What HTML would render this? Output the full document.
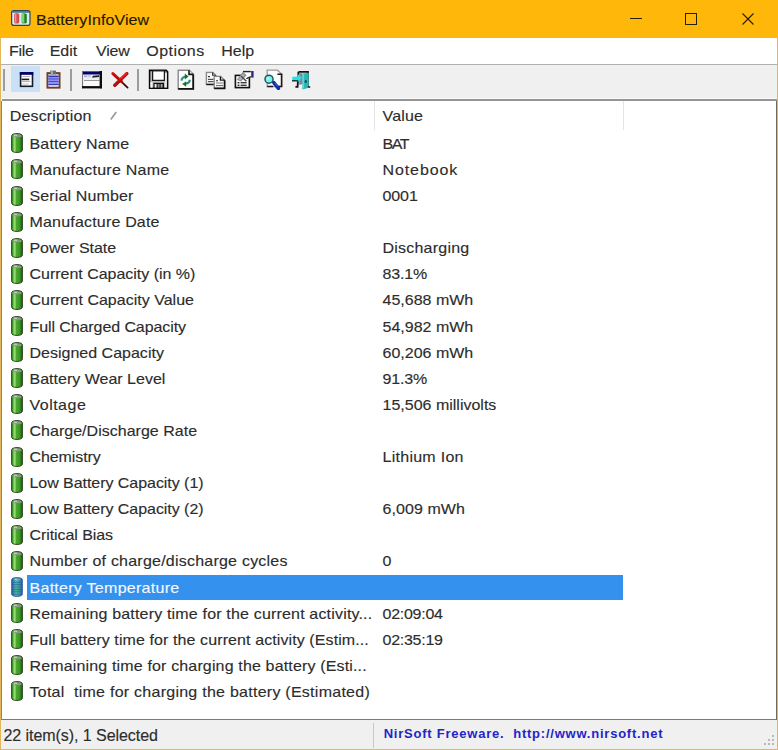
<!DOCTYPE html>
<html><head><meta charset="utf-8">
<style>
*{margin:0;padding:0;box-sizing:border-box}
html,body{width:778px;height:750px;overflow:hidden;background:#fff}
body{position:relative;font-family:"Liberation Sans",sans-serif;font-size:16px;color:#1a1a1a}
.row span,.hd,#menu span,#title .t,#status .s1{-webkit-text-stroke:0.15px #303030;color:#2c2c2c !important}
.row.sel span{-webkit-text-stroke:0.15px #f4f8ff;color:#f4f8ff !important}
#title .t{-webkit-text-stroke:0.15px #241800;color:#241800 !important}
.abs{position:absolute}
#title{left:0;top:0;width:778px;height:38px;background:#FFB80A}
#title .t{left:36px;top:9.5px;line-height:20px;font-size:16px;color:#2a1e00;letter-spacing:0.1px;transform:scaleY(0.87);transform-origin:0 15px}
#frameL{left:0;top:38px;width:1px;height:712px;background:#e2b65a}
#frameR{left:777px;top:38px;width:1px;height:712px;background:#e2b65a}
#frameB{left:0;top:748px;width:778px;height:2px;background:#e2b65a}
#menu{left:1px;top:38px;width:776px;height:26px;background:#fff}
#menu span{position:absolute;top:3px;line-height:20px;color:#1a1a1a;transform:scaleY(0.96);transform-origin:0 15px}
#menuline{left:1px;top:64px;width:776px;height:1px;background:#b0b0b0}
#tb{left:1px;top:65px;width:776px;height:34px;background:#f0f0f0;border-bottom:1px solid #fafafa}
#tbline{left:2px;top:99px;width:775px;height:2px;background:#959595}
.sep{position:absolute;width:2px;height:22px;top:69px;background:#9c9c9c}
#list{left:1px;top:101px;width:776px;height:619px;background:#fff;border-left:1px solid #8a8478;border-right:1px solid #6e6a60;border-bottom:1px solid #7a7a7a;overflow:hidden}
.hd{position:absolute;top:5px;line-height:20px;color:#2a2a2a;letter-spacing:0.15px;white-space:pre;transform:scaleY(0.87);transform-origin:0 15px}
.hsep{position:absolute;top:0;width:1px;height:29px;background:#e5e5e5}
.row{position:absolute;left:0;width:774px;height:26.1px}
.row .d{position:absolute;left:27.5px;top:-0.5px;line-height:26px;white-space:pre;letter-spacing:0.2px;color:#1a1a1a;transform:scaleY(0.87);transform-origin:0 18px}
.row .v{position:absolute;left:380.5px;top:-0.5px;line-height:26px;white-space:pre;letter-spacing:0.2px;color:#1a1a1a;transform:scaleY(0.87);transform-origin:0 18px}
.row.sel .d{color:#f4f8ff}
.hl{position:absolute;left:25px;top:-0.2px;width:596px;height:25.4px;background:#3492ee}
.bat{position:absolute;left:8.8px;top:2px;width:12px;height:20px}
#status{left:1px;top:720px;width:776px;height:29px;background:#f0f0f0}
#status .s1{position:absolute;left:2.4px;top:6px;line-height:20px;color:#1a1a1a;letter-spacing:-0.05px;white-space:pre;transform:scaleY(1);transform-origin:0 15px}
#status .s2{position:absolute;left:382.7px;top:4px;line-height:20px;color:#2424c8;font-weight:bold;font-size:13px;letter-spacing:0.77px;white-space:pre}
#ssep{left:373px;top:723px;width:1px;height:25px;background:#c8c8c8}
</style></head><body>
<div id="title" class="abs">
  <svg class="abs" style="left:11px;top:10px" width="20" height="16" viewBox="0 0 20 16">
    <rect x="0.6" y="0.6" width="18.4" height="14.8" rx="2.2" fill="#d8ecf2" stroke="#27485a" stroke-width="1.2"/>
    <rect x="1.4" y="1.2" width="16.8" height="1.5" fill="#3a6e7e"/>
    <rect x="3.2" y="3.2" width="5" height="10.4" rx="1.6" fill="#d84a50"/>
    <rect x="4" y="4" width="1.4" height="8.6" fill="#f09098"/>
    <rect x="10.6" y="3.2" width="5" height="10.4" rx="1.6" fill="#3aa038"/>
    <rect x="11.2" y="4" width="1.6" height="8.6" fill="#90e080"/>
    <rect x="14.4" y="4" width="1" height="9" fill="#1e5a1e"/>
  </svg>
  <div class="abs t">BatteryInfoView</div>
  <div class="abs" style="left:630px;top:18px;width:12px;height:1px;background:#2a1e00"></div>
  <div class="abs" style="left:685px;top:13px;width:12px;height:12px;border:1px solid #2a1e00"></div>
  <svg class="abs" style="left:742px;top:13px" width="12" height="12" viewBox="0 0 12 12"><path d="M0.5 0.5L11.5 11.5M11.5 0.5L0.5 11.5" stroke="#2a1e00" stroke-width="1.1"/></svg>
</div>
<div id="frameL" class="abs"></div>
<div id="frameR" class="abs"></div>
<div id="frameB" class="abs"></div>
<div id="menu" class="abs">
  <span style="left:8px;letter-spacing:-0.3px">File</span>
  <span style="left:48.7px">Edit</span>
  <span style="left:95px;letter-spacing:-0.2px">View</span>
  <span style="left:145.3px;letter-spacing:0.45px">Options</span>
  <span style="left:220.3px">Help</span>
</div>
<div id="menuline" class="abs"></div>
<div id="tb" class="abs"></div>

<div class="abs" style="left:11px;top:66px;width:29px;height:26px;background:#c9e0f7"></div>
<div class="sep" style="left:3px"></div>
<div class="sep" style="left:70px"></div>
<div class="sep" style="left:137px"></div>
<!-- icon1 -->
<svg class="abs" style="left:19px;top:72px" width="15" height="16" viewBox="0 0 15 16">
<rect x="1.6" y="0.9" width="11.9" height="13.4" fill="#fbfbfb" stroke="#141a28" stroke-width="1.6"/>
<rect x="0.8" y="0.1" width="13.5" height="2.7" fill="#00006a"/>
<rect x="3.2" y="4.2" width="8" height="0.8" fill="#a8a8a8"/>
<rect x="2.6" y="6.6" width="7.6" height="1.6" fill="#1c1c1c"/>
<rect x="3.2" y="9.2" width="8" height="0.8" fill="#a0a0a0"/>
<rect x="3.2" y="11.6" width="6.5" height="0.8" fill="#b8b8b8"/>
</svg>
<!-- icon2 clipboard -->
<svg class="abs" style="left:46px;top:70px" width="15" height="19" viewBox="0 0 15 19">
<rect x="1.1" y="2.8" width="12.8" height="15.2" fill="#7a4426" stroke="#6a3818" stroke-width="1.2"/>
<rect x="2.4" y="4.2" width="10.2" height="12.6" fill="#d8e0ff"/>
<rect x="2.4" y="5.6" width="10.2" height="1.4" fill="#3030b8"/>
<rect x="2.4" y="7" width="10.2" height="1.4" fill="#8c8cf4"/>
<rect x="2.4" y="8.4" width="10.2" height="1.3" fill="#3a3ac0"/>
<rect x="2.4" y="9.7" width="10.2" height="1.4" fill="#9090f4"/>
<rect x="2.4" y="11.1" width="10.2" height="1.3" fill="#3a3ac0"/>
<rect x="2.4" y="12.4" width="10.2" height="1.4" fill="#9494f4"/>
<rect x="2.4" y="13.8" width="10.2" height="1.3" fill="#3a3ac0"/>
<rect x="4.2" y="0.6" width="5.8" height="3.8" fill="#5a7a70"/>
<rect x="5.2" y="1.2" width="1.4" height="2.8" fill="#a8d0b8"/>
<rect x="7.6" y="1.2" width="1.2" height="2.8" fill="#7a5a80"/>
</svg>
<!-- icon3 window -->
<svg class="abs" style="left:82px;top:71px" width="20" height="18" viewBox="0 0 20 18">
<rect x="0" y="0" width="20" height="17.3" fill="#fafafa"/>
<rect x="0" y="0" width="1.1" height="17.3" fill="#7a7a7a"/>
<rect x="0" y="0" width="20" height="0.9" fill="#7a7a7a"/>
<rect x="1" y="0.7" width="17" height="3" fill="#00006e"/>
<rect x="1" y="3.7" width="17" height="4" fill="#e4e8f2"/>
<rect x="2" y="4.4" width="3" height="1.6" fill="#a8b0c8"/>
<rect x="5.6" y="4.4" width="3" height="1.6" fill="#c0c6d6"/>
<path d="M10 6.8 L11 4.8 L17 4.2 L17 5.9 L11.5 6.5Z" fill="#1a201a"/>
<rect x="2" y="8.9" width="15.5" height="1" fill="#8a8a8a"/>
<rect x="17.6" y="0" width="2.4" height="17.3" fill="#0c0c0c"/>
<rect x="0" y="15.1" width="20" height="2.3" fill="#0c0c0c"/>
</svg>
<!-- icon4 red X -->
<svg class="abs" style="left:111px;top:72px" width="18" height="17" viewBox="0 0 18 17">
<path d="M9 8.4 L16.6 15.6" stroke="#3a0808" stroke-width="1.8" stroke-linecap="round"/>
<path d="M1.9 1.6 L10.6 9.6" stroke="#c81414" stroke-width="3" stroke-linecap="round"/>
<path d="M2.6 2.8 L10.4 10" stroke="#7a0c0c" stroke-width="1" stroke-linecap="round"/>
<path d="M15.8 1.6 L3.8 13.2" stroke="#c01010" stroke-width="3.4" stroke-linecap="round"/>
<path d="M15.4 1.2 L9.8 6.6" stroke="#ec2a2a" stroke-width="1.2" stroke-linecap="round"/>
<path d="M4.6 14 L10.6 8.2" stroke="#8a0a0a" stroke-width="1" stroke-linecap="round"/>
</svg>
<!-- icon5 floppy -->
<svg class="abs" style="left:148px;top:69px" width="21" height="21" viewBox="0 0 21 21">
<path d="M1.6 1.4 L18.2 1.4 L19.6 2.8 L19.6 19.2 L1.6 19.2Z" fill="#c4c4c4" stroke="#0c0c0c" stroke-width="1.6"/>
<rect x="4.6" y="1.8" width="11.8" height="9.6" fill="#ffffff" stroke="#1a1a1a" stroke-width="1.3"/>
<rect x="2.4" y="13" width="2" height="5.6" fill="#f4f4f4"/>
<rect x="5.4" y="13.8" width="10.6" height="5.4" fill="#0c0c0c"/>
<rect x="6.6" y="15" width="2" height="3.6" fill="#f0f0f0"/>
<rect x="9.6" y="15" width="2" height="3.6" fill="#8a8a8a"/>
<rect x="12.6" y="15" width="2" height="3.6" fill="#a0a0a0"/>
<rect x="17" y="3.4" width="1.8" height="15" fill="#e8e8e8"/>
<rect x="17.4" y="2.4" width="1.2" height="1.2" fill="#303030"/>
</svg>
<!-- icon6 refresh doc -->
<svg class="abs" style="left:177px;top:69px" width="18" height="21" viewBox="0 0 18 21">
<path d="M1.2 1.2 L12.2 1.2 L16.4 5.4 L16.4 20 L1.2 20Z" fill="#fcfcfc" stroke="#8a8a8a" stroke-width="1.4"/>
<path d="M16.2 5.4 L16.2 19.8 L1.2 19.8" fill="none" stroke="#141414" stroke-width="1.8"/>
<path d="M12 1.2 L12 5.4 L16.4 5.4" fill="#f0f0f0" stroke="#141414" stroke-width="1.6"/>
<path d="M9 7.6 Q4.8 7.8 4.6 11.6" fill="none" stroke="#3a8a9a" stroke-width="2.2"/>
<path d="M7.8 4.4 L11.6 7.6 L7.8 10.6Z" fill="#0e7a16"/>
<path d="M8.6 14.6 Q12.6 14.4 12.8 10.8" fill="none" stroke="#2a8a7a" stroke-width="2.2"/>
<path d="M9.2 12.2 L5.2 15 L9.2 17.8Z" fill="#0e7a16"/>
</svg>
<!-- icon7 copy -->
<svg class="abs" style="left:205px;top:71px" width="21" height="19" viewBox="0 0 21 19">
<path d="M1.4 1.4 L7.8 1.4 L10.6 4.2 L10.6 13.4 L1.4 13.4Z" fill="#f8f8f8" stroke="#8a8a8a" stroke-width="1.4"/>
<path d="M10.6 4.2 L10.6 13.4 L1.4 13.4" fill="none" stroke="#1a1a1a" stroke-width="1.5"/>
<path d="M7.6 1.4 L7.6 4.2 L10.6 4.2" fill="none" stroke="#303030" stroke-width="1.1"/>
<rect x="3" y="5" width="2" height="1.2" fill="#303030"/>
<rect x="3" y="7.8" width="5.6" height="1.2" fill="#505050"/>
<rect x="3" y="10" width="5.6" height="1.2" fill="#505050"/>
<path d="M9.2 5.4 L15.6 5.4 L19.6 9.2 L19.6 17.4 L9.2 17.4Z" fill="#f8f8f8" stroke="#8a8a8a" stroke-width="1.4"/>
<path d="M19.6 9.2 L19.6 17.4 L9.2 17.4" fill="none" stroke="#101010" stroke-width="1.7"/>
<path d="M15.4 5.4 L15.4 9.2 L19.6 9.2" fill="none" stroke="#1a1a1a" stroke-width="1.3"/>
<rect x="11" y="9.2" width="2" height="1.1" fill="#404040"/>
<rect x="11" y="11.4" width="7" height="1.3" fill="#9a9a9a"/>
<rect x="11" y="14" width="7" height="1.1" fill="#707070"/>
</svg>
<!-- icon8 properties -->
<svg class="abs" style="left:234px;top:70px" width="21" height="19" viewBox="0 0 21 19">
<rect x="1.4" y="5.4" width="14" height="12.2" fill="#fafafa" stroke="#111111" stroke-width="1.6"/>
<path d="M9 1.6 L16.8 1.6 L17 6.4 L12.2 10.6 L7.4 6.2Z" fill="#ffffff"/>
<path d="M2.8 9.8 L9 1.8 L12.6 5.2 L7 11.6Z" fill="#8a8a8a"/>
<path d="M4 9.6 L9 3.4 L10.8 5 L6.6 10.4Z" fill="#b0b0b0"/>
<path d="M7.2 6.2 L12.4 11.2" stroke="#4a4a5a" stroke-width="1.5"/>
<path d="M9 1.6 L16.8 1.6" stroke="#222222" stroke-width="1.4"/>
<path d="M12.4 8.6 L17 6.6" stroke="#222222" stroke-width="1.3"/>
<rect x="17.2" y="1" width="2.4" height="6.6" fill="#2a2a80"/>
<rect x="3.6" y="12" width="1.8" height="1.4" fill="#202020"/>
<rect x="6.6" y="12" width="6" height="1.4" fill="#3a3a3a"/>
<rect x="3.6" y="14.6" width="1.8" height="1.4" fill="#202020"/>
<rect x="6.6" y="14.6" width="6" height="1.4" fill="#3a3a3a"/>
</svg>
<!-- icon9 find -->
<svg class="abs" style="left:263px;top:69px" width="20" height="21" viewBox="0 0 20 21">
<path d="M4.2 1.2 L14.5 1.2 L18.6 5 L18.6 17.5 L4.2 17.5Z" fill="#fbfbfb" stroke="#9a9a9a" stroke-width="1.3"/>
<path d="M14.4 5.2 L18.6 5.2 L18.6 17.5 L13 17.5" fill="none" stroke="#1a1a1a" stroke-width="1.6"/>
<path d="M4.2 17.5 L10 17.5" stroke="#1a1a1a" stroke-width="1.4"/>
<path d="M10.8 13.6 L15.4 19.4" stroke="#0c2aa8" stroke-width="3.4" stroke-linecap="round"/>
<path d="M11.6 13.8 L14.6 17.6" stroke="#3a6ae0" stroke-width="1"/>
<circle cx="6" cy="10.2" r="4" fill="#78f0ea" stroke="#1e5a5a" stroke-width="1.5"/>
<circle cx="5" cy="9.4" r="1.5" fill="#c0fff8" opacity="0.7"/>
</svg>
<!-- icon10 exit -->
<svg class="abs" style="left:291px;top:70px" width="20" height="20" viewBox="0 0 20 20">
<path d="M7.6 1.8 L17 1.8 L17 17" fill="none" stroke="#141414" stroke-width="1.8"/>
<path d="M7.4 1.8 L6.6 16.8 L4.4 16.8" fill="none" stroke="#141414" stroke-width="1.8"/>
<path d="M8.2 2.7 L11.5 3.6 L11.5 14 L8.2 15Z" fill="#8088a0"/>
<path d="M11.4 3.4 L17.8 2.8 L17.8 17.8 L11.4 19.4Z" fill="#2cb4b4"/>
<path d="M12.4 4 L12.4 18.4" stroke="#5ad8d8" stroke-width="1.4"/>
<rect x="13.8" y="10.4" width="1.8" height="2.2" fill="#0a3232"/>
<path d="M1.6 6.8 L6.4 6.8 L6.6 3.8 L10.8 8 L6.6 12 L6.4 10.4 L1.6 10.4 Q0.6 8.6 1.6 6.8Z" fill="#2ae0e0"/>
<path d="M1 10.8 L7 10.8" stroke="#0a2e2e" stroke-width="1.4"/>
<path d="M17 16.6 L19.2 17.2" stroke="#141414" stroke-width="1.5"/>
</svg>

<div id="tbline" class="abs"></div>
<div id="list" class="abs">
<span class="hd" style="left:7.8px">Description</span>
<svg class="abs" style="left:107px;top:10px" width="9" height="10" viewBox="0 0 9 10"><path d="M1.8 8.6 L7.2 0.9" stroke="#9a9a9a" stroke-width="1.7"/></svg>
<span class="hd" style="left:380.5px">Value</span>
<div class="hsep" style="left:372px"></div>
<div class="hsep" style="left:621px"></div>
<div class="row" style="top:30.30px"><svg class="bat" width="12" height="20" viewBox="0 0 12 20">
<defs><linearGradient id="g0" x1="0" x2="1" y1="0" y2="0">
<stop offset="0" stop-color="#2a5a1a"/><stop offset="0.14" stop-color="#58b83c"/><stop offset="0.3" stop-color="#9ae878"/>
<stop offset="0.44" stop-color="#4aa830"/><stop offset="0.72" stop-color="#3a9a24"/><stop offset="0.9" stop-color="#2a7018"/><stop offset="1" stop-color="#1c3e10"/></linearGradient></defs>
<path d="M0.6 3.2 Q0.6 0.6 6 0.6 Q11.4 0.6 11.4 3.2 L11.4 16.8 Q11.4 19.4 6 19.4 Q0.6 19.4 0.6 16.8Z" fill="url(#g0)" stroke="#2c4a20" stroke-width="1"/>
<path d="M1.2 3.2 Q1.5 1.2 6 1.2 Q10.5 1.2 10.8 3.2 Q10.5 4.2 6 4.2 Q1.5 4.2 1.2 3.2Z" fill="#8a9a88"/>
<path d="M3 3 Q4 2.2 6 2.2" stroke="#e8f0e8" stroke-width="0.8" fill="none"/>
</svg><span class="d" style="letter-spacing:0.164px">Battery Name</span><span class="v" style="letter-spacing:-1.500px">BAT</span></div>
<div class="row" style="top:56.40px"><svg class="bat" width="12" height="20" viewBox="0 0 12 20">
<defs><linearGradient id="g1" x1="0" x2="1" y1="0" y2="0">
<stop offset="0" stop-color="#2a5a1a"/><stop offset="0.14" stop-color="#58b83c"/><stop offset="0.3" stop-color="#9ae878"/>
<stop offset="0.44" stop-color="#4aa830"/><stop offset="0.72" stop-color="#3a9a24"/><stop offset="0.9" stop-color="#2a7018"/><stop offset="1" stop-color="#1c3e10"/></linearGradient></defs>
<path d="M0.6 3.2 Q0.6 0.6 6 0.6 Q11.4 0.6 11.4 3.2 L11.4 16.8 Q11.4 19.4 6 19.4 Q0.6 19.4 0.6 16.8Z" fill="url(#g1)" stroke="#2c4a20" stroke-width="1"/>
<path d="M1.2 3.2 Q1.5 1.2 6 1.2 Q10.5 1.2 10.8 3.2 Q10.5 4.2 6 4.2 Q1.5 4.2 1.2 3.2Z" fill="#8a9a88"/>
<path d="M3 3 Q4 2.2 6 2.2" stroke="#e8f0e8" stroke-width="0.8" fill="none"/>
</svg><span class="d" style="letter-spacing:0.240px">Manufacture Name</span><span class="v" style="letter-spacing:0.900px">Notebook</span></div>
<div class="row" style="top:82.50px"><svg class="bat" width="12" height="20" viewBox="0 0 12 20">
<defs><linearGradient id="g2" x1="0" x2="1" y1="0" y2="0">
<stop offset="0" stop-color="#2a5a1a"/><stop offset="0.14" stop-color="#58b83c"/><stop offset="0.3" stop-color="#9ae878"/>
<stop offset="0.44" stop-color="#4aa830"/><stop offset="0.72" stop-color="#3a9a24"/><stop offset="0.9" stop-color="#2a7018"/><stop offset="1" stop-color="#1c3e10"/></linearGradient></defs>
<path d="M0.6 3.2 Q0.6 0.6 6 0.6 Q11.4 0.6 11.4 3.2 L11.4 16.8 Q11.4 19.4 6 19.4 Q0.6 19.4 0.6 16.8Z" fill="url(#g2)" stroke="#2c4a20" stroke-width="1"/>
<path d="M1.2 3.2 Q1.5 1.2 6 1.2 Q10.5 1.2 10.8 3.2 Q10.5 4.2 6 4.2 Q1.5 4.2 1.2 3.2Z" fill="#8a9a88"/>
<path d="M3 3 Q4 2.2 6 2.2" stroke="#e8f0e8" stroke-width="0.8" fill="none"/>
</svg><span class="d" style="letter-spacing:0.133px">Serial Number</span><span class="v" style="letter-spacing:-0.100px">0001</span></div>
<div class="row" style="top:108.60px"><svg class="bat" width="12" height="20" viewBox="0 0 12 20">
<defs><linearGradient id="g3" x1="0" x2="1" y1="0" y2="0">
<stop offset="0" stop-color="#2a5a1a"/><stop offset="0.14" stop-color="#58b83c"/><stop offset="0.3" stop-color="#9ae878"/>
<stop offset="0.44" stop-color="#4aa830"/><stop offset="0.72" stop-color="#3a9a24"/><stop offset="0.9" stop-color="#2a7018"/><stop offset="1" stop-color="#1c3e10"/></linearGradient></defs>
<path d="M0.6 3.2 Q0.6 0.6 6 0.6 Q11.4 0.6 11.4 3.2 L11.4 16.8 Q11.4 19.4 6 19.4 Q0.6 19.4 0.6 16.8Z" fill="url(#g3)" stroke="#2c4a20" stroke-width="1"/>
<path d="M1.2 3.2 Q1.5 1.2 6 1.2 Q10.5 1.2 10.8 3.2 Q10.5 4.2 6 4.2 Q1.5 4.2 1.2 3.2Z" fill="#8a9a88"/>
<path d="M3 3 Q4 2.2 6 2.2" stroke="#e8f0e8" stroke-width="0.8" fill="none"/>
</svg><span class="d" style="letter-spacing:0.187px">Manufacture Date</span><span class="v" style="letter-spacing:0.200px"></span></div>
<div class="row" style="top:134.70px"><svg class="bat" width="12" height="20" viewBox="0 0 12 20">
<defs><linearGradient id="g4" x1="0" x2="1" y1="0" y2="0">
<stop offset="0" stop-color="#2a5a1a"/><stop offset="0.14" stop-color="#58b83c"/><stop offset="0.3" stop-color="#9ae878"/>
<stop offset="0.44" stop-color="#4aa830"/><stop offset="0.72" stop-color="#3a9a24"/><stop offset="0.9" stop-color="#2a7018"/><stop offset="1" stop-color="#1c3e10"/></linearGradient></defs>
<path d="M0.6 3.2 Q0.6 0.6 6 0.6 Q11.4 0.6 11.4 3.2 L11.4 16.8 Q11.4 19.4 6 19.4 Q0.6 19.4 0.6 16.8Z" fill="url(#g4)" stroke="#2c4a20" stroke-width="1"/>
<path d="M1.2 3.2 Q1.5 1.2 6 1.2 Q10.5 1.2 10.8 3.2 Q10.5 4.2 6 4.2 Q1.5 4.2 1.2 3.2Z" fill="#8a9a88"/>
<path d="M3 3 Q4 2.2 6 2.2" stroke="#e8f0e8" stroke-width="0.8" fill="none"/>
</svg><span class="d" style="letter-spacing:-0.060px">Power State</span><span class="v" style="letter-spacing:0.220px">Discharging</span></div>
<div class="row" style="top:160.80px"><svg class="bat" width="12" height="20" viewBox="0 0 12 20">
<defs><linearGradient id="g5" x1="0" x2="1" y1="0" y2="0">
<stop offset="0" stop-color="#2a5a1a"/><stop offset="0.14" stop-color="#58b83c"/><stop offset="0.3" stop-color="#9ae878"/>
<stop offset="0.44" stop-color="#4aa830"/><stop offset="0.72" stop-color="#3a9a24"/><stop offset="0.9" stop-color="#2a7018"/><stop offset="1" stop-color="#1c3e10"/></linearGradient></defs>
<path d="M0.6 3.2 Q0.6 0.6 6 0.6 Q11.4 0.6 11.4 3.2 L11.4 16.8 Q11.4 19.4 6 19.4 Q0.6 19.4 0.6 16.8Z" fill="url(#g5)" stroke="#2c4a20" stroke-width="1"/>
<path d="M1.2 3.2 Q1.5 1.2 6 1.2 Q10.5 1.2 10.8 3.2 Q10.5 4.2 6 4.2 Q1.5 4.2 1.2 3.2Z" fill="#8a9a88"/>
<path d="M3 3 Q4 2.2 6 2.2" stroke="#e8f0e8" stroke-width="0.8" fill="none"/>
</svg><span class="d" style="letter-spacing:-0.018px">Current Capacity (in %)</span><span class="v" style="letter-spacing:-0.150px">83.1%</span></div>
<div class="row" style="top:186.90px"><svg class="bat" width="12" height="20" viewBox="0 0 12 20">
<defs><linearGradient id="g6" x1="0" x2="1" y1="0" y2="0">
<stop offset="0" stop-color="#2a5a1a"/><stop offset="0.14" stop-color="#58b83c"/><stop offset="0.3" stop-color="#9ae878"/>
<stop offset="0.44" stop-color="#4aa830"/><stop offset="0.72" stop-color="#3a9a24"/><stop offset="0.9" stop-color="#2a7018"/><stop offset="1" stop-color="#1c3e10"/></linearGradient></defs>
<path d="M0.6 3.2 Q0.6 0.6 6 0.6 Q11.4 0.6 11.4 3.2 L11.4 16.8 Q11.4 19.4 6 19.4 Q0.6 19.4 0.6 16.8Z" fill="url(#g6)" stroke="#2c4a20" stroke-width="1"/>
<path d="M1.2 3.2 Q1.5 1.2 6 1.2 Q10.5 1.2 10.8 3.2 Q10.5 4.2 6 4.2 Q1.5 4.2 1.2 3.2Z" fill="#8a9a88"/>
<path d="M3 3 Q4 2.2 6 2.2" stroke="#e8f0e8" stroke-width="0.8" fill="none"/>
</svg><span class="d" style="letter-spacing:0.010px">Current Capacity Value</span><span class="v" style="letter-spacing:0.000px">45,688 mWh</span></div>
<div class="row" style="top:213.00px"><svg class="bat" width="12" height="20" viewBox="0 0 12 20">
<defs><linearGradient id="g7" x1="0" x2="1" y1="0" y2="0">
<stop offset="0" stop-color="#2a5a1a"/><stop offset="0.14" stop-color="#58b83c"/><stop offset="0.3" stop-color="#9ae878"/>
<stop offset="0.44" stop-color="#4aa830"/><stop offset="0.72" stop-color="#3a9a24"/><stop offset="0.9" stop-color="#2a7018"/><stop offset="1" stop-color="#1c3e10"/></linearGradient></defs>
<path d="M0.6 3.2 Q0.6 0.6 6 0.6 Q11.4 0.6 11.4 3.2 L11.4 16.8 Q11.4 19.4 6 19.4 Q0.6 19.4 0.6 16.8Z" fill="url(#g7)" stroke="#2c4a20" stroke-width="1"/>
<path d="M1.2 3.2 Q1.5 1.2 6 1.2 Q10.5 1.2 10.8 3.2 Q10.5 4.2 6 4.2 Q1.5 4.2 1.2 3.2Z" fill="#8a9a88"/>
<path d="M3 3 Q4 2.2 6 2.2" stroke="#e8f0e8" stroke-width="0.8" fill="none"/>
</svg><span class="d" style="letter-spacing:-0.090px">Full Charged Capacity</span><span class="v" style="letter-spacing:0.000px">54,982 mWh</span></div>
<div class="row" style="top:239.10px"><svg class="bat" width="12" height="20" viewBox="0 0 12 20">
<defs><linearGradient id="g8" x1="0" x2="1" y1="0" y2="0">
<stop offset="0" stop-color="#2a5a1a"/><stop offset="0.14" stop-color="#58b83c"/><stop offset="0.3" stop-color="#9ae878"/>
<stop offset="0.44" stop-color="#4aa830"/><stop offset="0.72" stop-color="#3a9a24"/><stop offset="0.9" stop-color="#2a7018"/><stop offset="1" stop-color="#1c3e10"/></linearGradient></defs>
<path d="M0.6 3.2 Q0.6 0.6 6 0.6 Q11.4 0.6 11.4 3.2 L11.4 16.8 Q11.4 19.4 6 19.4 Q0.6 19.4 0.6 16.8Z" fill="url(#g8)" stroke="#2c4a20" stroke-width="1"/>
<path d="M1.2 3.2 Q1.5 1.2 6 1.2 Q10.5 1.2 10.8 3.2 Q10.5 4.2 6 4.2 Q1.5 4.2 1.2 3.2Z" fill="#8a9a88"/>
<path d="M3 3 Q4 2.2 6 2.2" stroke="#e8f0e8" stroke-width="0.8" fill="none"/>
</svg><span class="d" style="letter-spacing:0.006px">Designed Capacity</span><span class="v" style="letter-spacing:0.000px">60,206 mWh</span></div>
<div class="row" style="top:265.20px"><svg class="bat" width="12" height="20" viewBox="0 0 12 20">
<defs><linearGradient id="g9" x1="0" x2="1" y1="0" y2="0">
<stop offset="0" stop-color="#2a5a1a"/><stop offset="0.14" stop-color="#58b83c"/><stop offset="0.3" stop-color="#9ae878"/>
<stop offset="0.44" stop-color="#4aa830"/><stop offset="0.72" stop-color="#3a9a24"/><stop offset="0.9" stop-color="#2a7018"/><stop offset="1" stop-color="#1c3e10"/></linearGradient></defs>
<path d="M0.6 3.2 Q0.6 0.6 6 0.6 Q11.4 0.6 11.4 3.2 L11.4 16.8 Q11.4 19.4 6 19.4 Q0.6 19.4 0.6 16.8Z" fill="url(#g9)" stroke="#2c4a20" stroke-width="1"/>
<path d="M1.2 3.2 Q1.5 1.2 6 1.2 Q10.5 1.2 10.8 3.2 Q10.5 4.2 6 4.2 Q1.5 4.2 1.2 3.2Z" fill="#8a9a88"/>
<path d="M3 3 Q4 2.2 6 2.2" stroke="#e8f0e8" stroke-width="0.8" fill="none"/>
</svg><span class="d" style="letter-spacing:0.006px">Battery Wear Level</span><span class="v" style="letter-spacing:-0.150px">91.3%</span></div>
<div class="row" style="top:291.30px"><svg class="bat" width="12" height="20" viewBox="0 0 12 20">
<defs><linearGradient id="g10" x1="0" x2="1" y1="0" y2="0">
<stop offset="0" stop-color="#2a5a1a"/><stop offset="0.14" stop-color="#58b83c"/><stop offset="0.3" stop-color="#9ae878"/>
<stop offset="0.44" stop-color="#4aa830"/><stop offset="0.72" stop-color="#3a9a24"/><stop offset="0.9" stop-color="#2a7018"/><stop offset="1" stop-color="#1c3e10"/></linearGradient></defs>
<path d="M0.6 3.2 Q0.6 0.6 6 0.6 Q11.4 0.6 11.4 3.2 L11.4 16.8 Q11.4 19.4 6 19.4 Q0.6 19.4 0.6 16.8Z" fill="url(#g10)" stroke="#2c4a20" stroke-width="1"/>
<path d="M1.2 3.2 Q1.5 1.2 6 1.2 Q10.5 1.2 10.8 3.2 Q10.5 4.2 6 4.2 Q1.5 4.2 1.2 3.2Z" fill="#8a9a88"/>
<path d="M3 3 Q4 2.2 6 2.2" stroke="#e8f0e8" stroke-width="0.8" fill="none"/>
</svg><span class="d" style="letter-spacing:0.483px">Voltage</span><span class="v" style="letter-spacing:0.000px">15,506 millivolts</span></div>
<div class="row" style="top:317.40px"><svg class="bat" width="12" height="20" viewBox="0 0 12 20">
<defs><linearGradient id="g11" x1="0" x2="1" y1="0" y2="0">
<stop offset="0" stop-color="#2a5a1a"/><stop offset="0.14" stop-color="#58b83c"/><stop offset="0.3" stop-color="#9ae878"/>
<stop offset="0.44" stop-color="#4aa830"/><stop offset="0.72" stop-color="#3a9a24"/><stop offset="0.9" stop-color="#2a7018"/><stop offset="1" stop-color="#1c3e10"/></linearGradient></defs>
<path d="M0.6 3.2 Q0.6 0.6 6 0.6 Q11.4 0.6 11.4 3.2 L11.4 16.8 Q11.4 19.4 6 19.4 Q0.6 19.4 0.6 16.8Z" fill="url(#g11)" stroke="#2c4a20" stroke-width="1"/>
<path d="M1.2 3.2 Q1.5 1.2 6 1.2 Q10.5 1.2 10.8 3.2 Q10.5 4.2 6 4.2 Q1.5 4.2 1.2 3.2Z" fill="#8a9a88"/>
<path d="M3 3 Q4 2.2 6 2.2" stroke="#e8f0e8" stroke-width="0.8" fill="none"/>
</svg><span class="d" style="letter-spacing:0.020px">Charge/Discharge Rate</span><span class="v" style="letter-spacing:0.200px"></span></div>
<div class="row" style="top:343.50px"><svg class="bat" width="12" height="20" viewBox="0 0 12 20">
<defs><linearGradient id="g12" x1="0" x2="1" y1="0" y2="0">
<stop offset="0" stop-color="#2a5a1a"/><stop offset="0.14" stop-color="#58b83c"/><stop offset="0.3" stop-color="#9ae878"/>
<stop offset="0.44" stop-color="#4aa830"/><stop offset="0.72" stop-color="#3a9a24"/><stop offset="0.9" stop-color="#2a7018"/><stop offset="1" stop-color="#1c3e10"/></linearGradient></defs>
<path d="M0.6 3.2 Q0.6 0.6 6 0.6 Q11.4 0.6 11.4 3.2 L11.4 16.8 Q11.4 19.4 6 19.4 Q0.6 19.4 0.6 16.8Z" fill="url(#g12)" stroke="#2c4a20" stroke-width="1"/>
<path d="M1.2 3.2 Q1.5 1.2 6 1.2 Q10.5 1.2 10.8 3.2 Q10.5 4.2 6 4.2 Q1.5 4.2 1.2 3.2Z" fill="#8a9a88"/>
<path d="M3 3 Q4 2.2 6 2.2" stroke="#e8f0e8" stroke-width="0.8" fill="none"/>
</svg><span class="d" style="letter-spacing:-0.088px">Chemistry</span><span class="v" style="letter-spacing:0.270px">Lithium Ion</span></div>
<div class="row" style="top:369.60px"><svg class="bat" width="12" height="20" viewBox="0 0 12 20">
<defs><linearGradient id="g13" x1="0" x2="1" y1="0" y2="0">
<stop offset="0" stop-color="#2a5a1a"/><stop offset="0.14" stop-color="#58b83c"/><stop offset="0.3" stop-color="#9ae878"/>
<stop offset="0.44" stop-color="#4aa830"/><stop offset="0.72" stop-color="#3a9a24"/><stop offset="0.9" stop-color="#2a7018"/><stop offset="1" stop-color="#1c3e10"/></linearGradient></defs>
<path d="M0.6 3.2 Q0.6 0.6 6 0.6 Q11.4 0.6 11.4 3.2 L11.4 16.8 Q11.4 19.4 6 19.4 Q0.6 19.4 0.6 16.8Z" fill="url(#g13)" stroke="#2c4a20" stroke-width="1"/>
<path d="M1.2 3.2 Q1.5 1.2 6 1.2 Q10.5 1.2 10.8 3.2 Q10.5 4.2 6 4.2 Q1.5 4.2 1.2 3.2Z" fill="#8a9a88"/>
<path d="M3 3 Q4 2.2 6 2.2" stroke="#e8f0e8" stroke-width="0.8" fill="none"/>
</svg><span class="d" style="letter-spacing:-0.048px">Low Battery Capacity (1)</span><span class="v" style="letter-spacing:0.200px"></span></div>
<div class="row" style="top:395.70px"><svg class="bat" width="12" height="20" viewBox="0 0 12 20">
<defs><linearGradient id="g14" x1="0" x2="1" y1="0" y2="0">
<stop offset="0" stop-color="#2a5a1a"/><stop offset="0.14" stop-color="#58b83c"/><stop offset="0.3" stop-color="#9ae878"/>
<stop offset="0.44" stop-color="#4aa830"/><stop offset="0.72" stop-color="#3a9a24"/><stop offset="0.9" stop-color="#2a7018"/><stop offset="1" stop-color="#1c3e10"/></linearGradient></defs>
<path d="M0.6 3.2 Q0.6 0.6 6 0.6 Q11.4 0.6 11.4 3.2 L11.4 16.8 Q11.4 19.4 6 19.4 Q0.6 19.4 0.6 16.8Z" fill="url(#g14)" stroke="#2c4a20" stroke-width="1"/>
<path d="M1.2 3.2 Q1.5 1.2 6 1.2 Q10.5 1.2 10.8 3.2 Q10.5 4.2 6 4.2 Q1.5 4.2 1.2 3.2Z" fill="#8a9a88"/>
<path d="M3 3 Q4 2.2 6 2.2" stroke="#e8f0e8" stroke-width="0.8" fill="none"/>
</svg><span class="d" style="letter-spacing:-0.048px">Low Battery Capacity (2)</span><span class="v" style="letter-spacing:0.075px">6,009 mWh</span></div>
<div class="row" style="top:421.80px"><svg class="bat" width="12" height="20" viewBox="0 0 12 20">
<defs><linearGradient id="g15" x1="0" x2="1" y1="0" y2="0">
<stop offset="0" stop-color="#2a5a1a"/><stop offset="0.14" stop-color="#58b83c"/><stop offset="0.3" stop-color="#9ae878"/>
<stop offset="0.44" stop-color="#4aa830"/><stop offset="0.72" stop-color="#3a9a24"/><stop offset="0.9" stop-color="#2a7018"/><stop offset="1" stop-color="#1c3e10"/></linearGradient></defs>
<path d="M0.6 3.2 Q0.6 0.6 6 0.6 Q11.4 0.6 11.4 3.2 L11.4 16.8 Q11.4 19.4 6 19.4 Q0.6 19.4 0.6 16.8Z" fill="url(#g15)" stroke="#2c4a20" stroke-width="1"/>
<path d="M1.2 3.2 Q1.5 1.2 6 1.2 Q10.5 1.2 10.8 3.2 Q10.5 4.2 6 4.2 Q1.5 4.2 1.2 3.2Z" fill="#8a9a88"/>
<path d="M3 3 Q4 2.2 6 2.2" stroke="#e8f0e8" stroke-width="0.8" fill="none"/>
</svg><span class="d" style="letter-spacing:-0.075px">Critical Bias</span><span class="v" style="letter-spacing:0.200px"></span></div>
<div class="row" style="top:447.90px"><svg class="bat" width="12" height="20" viewBox="0 0 12 20">
<defs><linearGradient id="g16" x1="0" x2="1" y1="0" y2="0">
<stop offset="0" stop-color="#2a5a1a"/><stop offset="0.14" stop-color="#58b83c"/><stop offset="0.3" stop-color="#9ae878"/>
<stop offset="0.44" stop-color="#4aa830"/><stop offset="0.72" stop-color="#3a9a24"/><stop offset="0.9" stop-color="#2a7018"/><stop offset="1" stop-color="#1c3e10"/></linearGradient></defs>
<path d="M0.6 3.2 Q0.6 0.6 6 0.6 Q11.4 0.6 11.4 3.2 L11.4 16.8 Q11.4 19.4 6 19.4 Q0.6 19.4 0.6 16.8Z" fill="url(#g16)" stroke="#2c4a20" stroke-width="1"/>
<path d="M1.2 3.2 Q1.5 1.2 6 1.2 Q10.5 1.2 10.8 3.2 Q10.5 4.2 6 4.2 Q1.5 4.2 1.2 3.2Z" fill="#8a9a88"/>
<path d="M3 3 Q4 2.2 6 2.2" stroke="#e8f0e8" stroke-width="0.8" fill="none"/>
</svg><span class="d" style="letter-spacing:0.225px">Number of charge/discharge cycles</span><span class="v" style="letter-spacing:-0.700px">0</span></div>
<div class="row sel" style="top:474.00px"><div class="hl"></div><svg class="bat" width="12" height="20" viewBox="0 0 12 20">
<defs><linearGradient id="gsel" x1="0" x2="1" y1="0" y2="0">
<stop offset="0" stop-color="#2a5aa0"/><stop offset="0.2" stop-color="#3a90a8"/><stop offset="0.4" stop-color="#48b8a0"/>
<stop offset="0.6" stop-color="#3aa898"/><stop offset="0.85" stop-color="#3a80a8"/><stop offset="1" stop-color="#2a50a0"/></linearGradient>
<pattern id="hstr" width="3" height="2.4" patternUnits="userSpaceOnUse"><rect width="3" height="0.9" fill="#1a3a90" opacity="0.45"/></pattern></defs>
<path d="M0.6 3 Q0.6 0.6 6 0.6 Q11.4 0.6 11.4 3 L11.4 17 Q11.4 19.4 6 19.4 Q0.6 19.4 0.6 17Z" fill="url(#gsel)" stroke="#3060a8" stroke-width="0.8"/>
<path d="M0.6 3 Q0.6 0.6 6 0.6 Q11.4 0.6 11.4 3 L11.4 17 Q11.4 19.4 6 19.4 Q0.6 19.4 0.6 17Z" fill="url(#hstr)"/>
<path d="M2 2.6 Q3 1.4 6 1.4 Q9 1.4 10 2.6 Q9 3.6 6 3.6 Q3 3.6 2 2.6Z" fill="#6a9ae0"/>
<path d="M4 2.2 L6.5 3.2" stroke="#b0e0ff" stroke-width="0.9"/>
</svg><span class="d" style="letter-spacing:0.278px">Battery Temperature</span><span class="v" style="letter-spacing:0.200px"></span></div>
<div class="row" style="top:500.10px"><svg class="bat" width="12" height="20" viewBox="0 0 12 20">
<defs><linearGradient id="g18" x1="0" x2="1" y1="0" y2="0">
<stop offset="0" stop-color="#2a5a1a"/><stop offset="0.14" stop-color="#58b83c"/><stop offset="0.3" stop-color="#9ae878"/>
<stop offset="0.44" stop-color="#4aa830"/><stop offset="0.72" stop-color="#3a9a24"/><stop offset="0.9" stop-color="#2a7018"/><stop offset="1" stop-color="#1c3e10"/></linearGradient></defs>
<path d="M0.6 3.2 Q0.6 0.6 6 0.6 Q11.4 0.6 11.4 3.2 L11.4 16.8 Q11.4 19.4 6 19.4 Q0.6 19.4 0.6 16.8Z" fill="url(#g18)" stroke="#2c4a20" stroke-width="1"/>
<path d="M1.2 3.2 Q1.5 1.2 6 1.2 Q10.5 1.2 10.8 3.2 Q10.5 4.2 6 4.2 Q1.5 4.2 1.2 3.2Z" fill="#8a9a88"/>
<path d="M3 3 Q4 2.2 6 2.2" stroke="#e8f0e8" stroke-width="0.8" fill="none"/>
</svg><span class="d" style="letter-spacing:0.176px">Remaining battery time for the current activity...</span><span class="v" style="letter-spacing:-0.257px">02:09:04</span></div>
<div class="row" style="top:526.20px"><svg class="bat" width="12" height="20" viewBox="0 0 12 20">
<defs><linearGradient id="g19" x1="0" x2="1" y1="0" y2="0">
<stop offset="0" stop-color="#2a5a1a"/><stop offset="0.14" stop-color="#58b83c"/><stop offset="0.3" stop-color="#9ae878"/>
<stop offset="0.44" stop-color="#4aa830"/><stop offset="0.72" stop-color="#3a9a24"/><stop offset="0.9" stop-color="#2a7018"/><stop offset="1" stop-color="#1c3e10"/></linearGradient></defs>
<path d="M0.6 3.2 Q0.6 0.6 6 0.6 Q11.4 0.6 11.4 3.2 L11.4 16.8 Q11.4 19.4 6 19.4 Q0.6 19.4 0.6 16.8Z" fill="url(#g19)" stroke="#2c4a20" stroke-width="1"/>
<path d="M1.2 3.2 Q1.5 1.2 6 1.2 Q10.5 1.2 10.8 3.2 Q10.5 4.2 6 4.2 Q1.5 4.2 1.2 3.2Z" fill="#8a9a88"/>
<path d="M3 3 Q4 2.2 6 2.2" stroke="#e8f0e8" stroke-width="0.8" fill="none"/>
</svg><span class="d" style="letter-spacing:0.098px">Full battery time for the current activity (Estim...</span><span class="v" style="letter-spacing:-0.257px">02:35:19</span></div>
<div class="row" style="top:552.30px"><svg class="bat" width="12" height="20" viewBox="0 0 12 20">
<defs><linearGradient id="g20" x1="0" x2="1" y1="0" y2="0">
<stop offset="0" stop-color="#2a5a1a"/><stop offset="0.14" stop-color="#58b83c"/><stop offset="0.3" stop-color="#9ae878"/>
<stop offset="0.44" stop-color="#4aa830"/><stop offset="0.72" stop-color="#3a9a24"/><stop offset="0.9" stop-color="#2a7018"/><stop offset="1" stop-color="#1c3e10"/></linearGradient></defs>
<path d="M0.6 3.2 Q0.6 0.6 6 0.6 Q11.4 0.6 11.4 3.2 L11.4 16.8 Q11.4 19.4 6 19.4 Q0.6 19.4 0.6 16.8Z" fill="url(#g20)" stroke="#2c4a20" stroke-width="1"/>
<path d="M1.2 3.2 Q1.5 1.2 6 1.2 Q10.5 1.2 10.8 3.2 Q10.5 4.2 6 4.2 Q1.5 4.2 1.2 3.2Z" fill="#8a9a88"/>
<path d="M3 3 Q4 2.2 6 2.2" stroke="#e8f0e8" stroke-width="0.8" fill="none"/>
</svg><span class="d" style="letter-spacing:0.153px">Remaining time for charging the battery (Esti...</span><span class="v" style="letter-spacing:0.200px"></span></div>
<div class="row" style="top:578.40px"><svg class="bat" width="12" height="20" viewBox="0 0 12 20">
<defs><linearGradient id="g21" x1="0" x2="1" y1="0" y2="0">
<stop offset="0" stop-color="#2a5a1a"/><stop offset="0.14" stop-color="#58b83c"/><stop offset="0.3" stop-color="#9ae878"/>
<stop offset="0.44" stop-color="#4aa830"/><stop offset="0.72" stop-color="#3a9a24"/><stop offset="0.9" stop-color="#2a7018"/><stop offset="1" stop-color="#1c3e10"/></linearGradient></defs>
<path d="M0.6 3.2 Q0.6 0.6 6 0.6 Q11.4 0.6 11.4 3.2 L11.4 16.8 Q11.4 19.4 6 19.4 Q0.6 19.4 0.6 16.8Z" fill="url(#g21)" stroke="#2c4a20" stroke-width="1"/>
<path d="M1.2 3.2 Q1.5 1.2 6 1.2 Q10.5 1.2 10.8 3.2 Q10.5 4.2 6 4.2 Q1.5 4.2 1.2 3.2Z" fill="#8a9a88"/>
<path d="M3 3 Q4 2.2 6 2.2" stroke="#e8f0e8" stroke-width="0.8" fill="none"/>
</svg><span class="d" style="letter-spacing:0.257px">Total  time for charging the battery (Estimated)</span><span class="v" style="letter-spacing:0.200px"></span></div>
</div>
<div id="status" class="abs">
  <span class="s1">22 item(s), 1 Selected</span>
  <span class="s2">NirSoft Freeware.  http://www.nirsoft.net</span>
  <svg class="abs" style="left:762px;top:14px" width="12" height="12" viewBox="0 0 12 12"><g fill="#b8b8b8"><rect x="9" y="1" width="2" height="2"/><rect x="5" y="5" width="2" height="2"/><rect x="9" y="5" width="2" height="2"/><rect x="1" y="9" width="2" height="2"/><rect x="5" y="9" width="2" height="2"/><rect x="9" y="9" width="2" height="2"/></g></svg>
</div>
<div id="ssep" class="abs"></div>
</body></html>
